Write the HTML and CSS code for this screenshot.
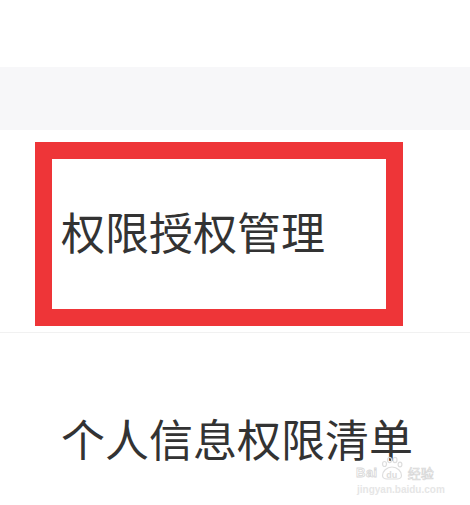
FILE: index.html
```html
<!DOCTYPE html>
<html lang="zh-CN">
<head>
<meta charset="utf-8">
<link rel="stylesheet" href="styles.css">
</head>
<body>
<div class="page">
  <div class="top"></div>
  <div class="band"></div>
  <div class="row row-first">
    <span class="label">权限授权管理</span>
    <div class="highlight"></div>
  </div>
  <div class="row row-second">
    <span class="label">个人信息权限清单</span>
  </div>
  <div class="watermark">
    <div class="wm-logo">
      <span class="wm-bai">Bai</span>
      <span class="wm-du">
        <svg class="wm-paw" width="24" height="24" viewBox="0 0 24 24">
          <g fill="none" stroke="#dedede" stroke-width="1.2">
            <ellipse cx="4.5" cy="8" rx="2" ry="2.5"/>
            <ellipse cx="9.5" cy="4" rx="2" ry="2.6"/>
            <ellipse cx="15" cy="4" rx="2" ry="2.6"/>
            <ellipse cx="20" cy="8.5" rx="1.9" ry="2.4"/>
            <path d="M2.5 19.5c0-4 4-8.5 9.5-8.5s9.5 4.5 9.5 8.5c0 2-2 3.5-4.5 3.5H7c-2.5 0-4.5-1.5-4.5-3.5z"/>
          </g>
        </svg>
        <span class="wm-du-text">du</span>
      </span>
      <span class="wm-jy">经验</span>
    </div>
    <div class="wm-url">jingyan.baidu.com</div>
  </div>
</div>
</body>
</html>
```
FILE: styles.css
```css
html, body {
  margin: 0;
  padding: 0;
  background: #ffffff;
}
.page {
  position: relative;
  width: 470px;
  height: 505px;
  overflow: hidden;
  font-family: "Noto Sans CJK SC", "Noto Sans", sans-serif;
}
.top {
  height: 67px;
}
.band {
  height: 63px;
  background: #f7f7f9;
}
.row {
  position: relative;
  display: flex;
  align-items: center;
  padding-left: 61px;
  box-sizing: border-box;
}
.row-first {
  height: 203px;
  border-bottom: 1px solid #f1f1f1;
}
.row-second {
  height: 210px;
}
.label {
  font-size: 44px;
  line-height: 1;
  color: #333333;
  white-space: nowrap;
}
.highlight {
  position: absolute;
  left: 35px;
  top: 12px;
  width: 368px;
  height: 184px;
  border: 17.5px solid #ee3538;
  box-sizing: border-box;
}
.watermark {
  position: absolute;
  left: 356px;
  top: 463px;
}
.wm-logo {
  display: flex;
  align-items: flex-end;
  height: 18px;
}
.wm-bai {
  font-family: "Liberation Sans", sans-serif;
  font-weight: bold;
  font-size: 13px;
  line-height: 16px;
  letter-spacing: 0.5px;
  color: transparent;
  -webkit-text-stroke: 0.8px #d8d8d8;
}
.wm-du {
  position: relative;
  width: 24px;
  height: 16px;
  margin-left: 2px;
  display: flex;
  justify-content: center;
  align-items: flex-end;
}
.wm-paw {
  position: absolute;
  left: 0;
  top: -9px;
}
.wm-du-text {
  position: relative;
  font-family: "Liberation Sans", sans-serif;
  font-weight: bold;
  font-size: 9px;
  line-height: 12px;
  color: #dcdcdc;
}
.wm-jy {
  font-size: 13px;
  line-height: 16px;
  margin-left: 4px;
  color: transparent;
  -webkit-text-stroke: 0.7px #d8d8d8;
}
.wm-url {
  font-family: "Liberation Sans", sans-serif;
  font-size: 10px;
  line-height: 12px;
  margin-top: 3px;
  margin-left: 1px;
  color: #e6e6e6;
  font-weight: bold;
}
```
